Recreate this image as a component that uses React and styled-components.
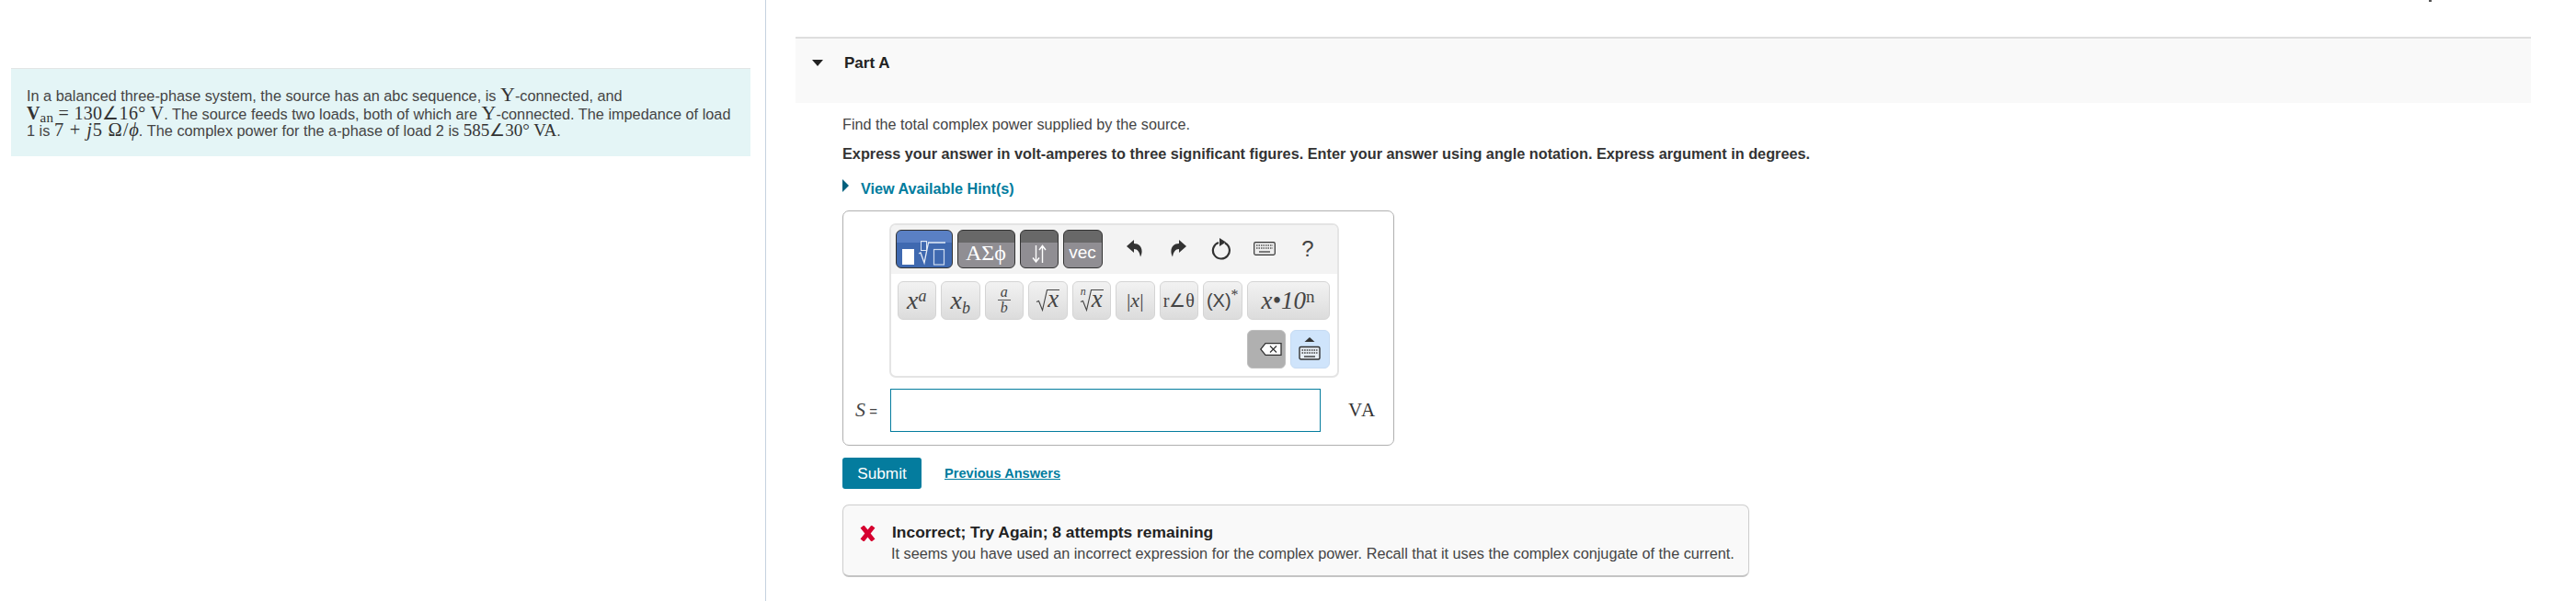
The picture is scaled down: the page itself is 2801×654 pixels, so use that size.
import React from "react";
import styled, { createGlobalStyle } from "styled-components";

const Global = createGlobalStyle`
  html, body { margin: 0; padding: 0; background: #fff; }
  body { font-family: "Liberation Sans", Arial, sans-serif; color: #333; }
`;
const Page = styled.div`position: relative; display: flex; width: 2801px; height: 654px; overflow: hidden;`;
const ClippedMark = styled.i`position: absolute; top: 0; left: 2641px; width: 3px; height: 2px; background: #555;`;
const LeftPane = styled.aside`width: 833px; flex: none; border-right: 1px solid #c5d2df; padding: 74px 16px 0 12px; box-sizing: border-box;`;
const Prompt = styled.div`
  background: #e4f5f6; border-top: 1px solid #e2e6e6; height: 96px; box-sizing: border-box;
  padding: 17px 0 0 17px; font-size: 16.3px; color: #444; width: 804px; white-space: nowrap;
`;
const PromptLine = styled.div`height: 19.6px; line-height: 19.6px;`;
const M = styled.span`font-family: "Liberation Serif", serif; font-size: ${p => p.$s || 20}px; line-height: 1; color: #333; letter-spacing: ${p => p.$ls || 0}px; font-weight: ${p => p.$b ? 700 : 400}; font-style: ${p => p.$i ? "italic" : "normal"};`;
const Sub = styled.sub`font-size: 15px; line-height: 0; vertical-align: -3px;`;
const RightPane = styled.main`flex: 1; padding: 40px 49px 0 32px; min-width: 0;`;
const PartHeader = styled.header`
  height: 72px; box-sizing: border-box; background: #f9f9f9; border-top: 2px solid #dedede;
  display: flex; align-items: flex-start; padding: 18px 0 0 18px; gap: 23px;
`;
const Caret = styled.i`width: 0; height: 0; border-left: 6.5px solid transparent; border-right: 6.5px solid transparent; border-top: 7px solid #222; margin-top: 5px;`;
const PartTitle = styled.h2`margin: 0; font-size: 17px; line-height: 18px; font-weight: 700; color: #222;`;
const PartBody = styled.section`padding-left: 51px;`;
const Instruction = styled.p`margin: 14px 0 0; font-size: 16.2px; line-height: 19px; color: #444;`;
const BoldInstruction = styled.p`margin: 13px 0 0; font-size: 16.25px; line-height: 19px; font-weight: 700; color: #333;`;
const HintLink = styled.a`display: flex; align-items: flex-start; margin-top: 18px; height: 20px; gap: 13px; font-size: 16.2px; line-height: 20px; font-weight: 700; color: #007c9e;`;
const HintCaret = styled.i`width: 0; height: 0; border-top: 7px solid transparent; border-bottom: 7px solid transparent; border-left: 7px solid #00607e;`;
const AnswerBox = styled.div`
  margin-top: 14px; width: 600px; height: 256px; box-sizing: border-box; border: 1.5px solid #b0b0b0; border-radius: 7px;
  padding: 12.5px 0 0 49.5px;
`;
const Editor = styled.div`width: 489px; height: 168px; box-sizing: border-box; border: 2px solid #e4e4e4; border-radius: 7px; overflow: hidden;`;
const ToolHead = styled.div`height: 53px; background: #f3f3f3; display: flex; align-items: flex-start; padding: 5px 0 0 5px; box-sizing: border-box;`;
const Tabs = styled.div`display: flex; gap: 5px;`;
const Tab = styled.div`
  width: ${p => p.$w}px; height: 42px; box-sizing: border-box; border: 1.5px solid #333; border-radius: 6px; overflow: hidden;
  background: linear-gradient(${p => p.$on ? "#5a80c4 0 33%, #3f69b0 33%" : "#686868 0 33%, #908e93 33%"});
  display: flex; align-items: flex-end; justify-content: center; color: #fff; padding-bottom: 2px;
`;
const TabText = styled.span`font-family: ${p => p.$serif ? '"Liberation Serif", serif' : '"Liberation Sans", sans-serif'}; font-size: ${p => p.$s}px; line-height: 28px; color: #fff;`;
const Tools = styled.div`display: flex; margin-left: 12px; align-items: center; height: 42px;`;
const Tool = styled.div`width: 47px; display: flex; justify-content: center; color: #333;`;
const Help = styled.span`font-size: 24px; line-height: 26px; color: #444;`;
const KeyRow = styled.div`display: flex; gap: 5px; padding: 8px 0 0 7px;`;
const Key = styled.div`
  width: ${p => p.$w || 42.5}px; height: 42px; box-sizing: border-box; border: 1px solid #d4d4d4; border-radius: 6px;
  background: linear-gradient(#f2f2f2, #dcdcdc); display: flex; align-items: center; justify-content: center;
  font-family: ${p => p.$sans ? '"Liberation Sans", sans-serif' : '"Liberation Serif", serif'}; color: #444; font-size: ${p => p.$s || 28}px; white-space: nowrap;
`;
const KeyFace = styled.span`display: block; line-height: 32px;`;
const KeySup = styled.sup`font-size: ${p => p.$s || 18}px; line-height: 0; vertical-align: ${p => p.$up || 8}px; font-style: ${p => p.$plain ? "normal" : "italic"}; font-family: "Liberation Serif", serif;`;
const KeySub = styled.sub`font-size: 18px; line-height: 0; vertical-align: -5px; font-style: italic;`;
const Frac = styled.span`display: flex; flex-direction: column; align-items: center; font-size: 16px; line-height: 16px; font-style: italic;`;
const FracTop = styled.span`border-bottom: 1px solid #555; padding: 0 3px;`;
const Italic = styled.span`font-style: italic;`;
const RadicalWrap = styled.span`position: relative; display: flex; align-items: flex-start; height: 24px;`;
const RadicalIndex = styled.span`position: absolute; left: 1px; top: -4px; font-size: 12px; line-height: 12px; font-style: italic;`;
const RadicalBody = styled.span`display: block; border-top: 1px solid #444; height: 23px; line-height: 19px; font-size: 27px; font-style: italic; padding-right: 1px;`;
const ActionRow = styled.div`display: flex; justify-content: flex-end; gap: 5px; padding: 11px 8px 0 0;`;
const ActionKey = styled.div`
  width: 42.5px; height: 42px; box-sizing: border-box; border-radius: 6px; border: 1px solid ${p => p.$blue ? "#c6dbf2" : "#bdbdbd"};
  background: ${p => p.$blue ? "#cfe4fb" : "#b0b0b0"}; display: flex; flex-direction: column; align-items: center; justify-content: center;
`;
const InputRow = styled.div`display: flex; align-items: center; margin: 12px 0 0 -49.5px; height: 47px;`;
const Label = styled.div`width: 51px; padding-left: 13px; box-sizing: border-box; font-size: 15px; white-space: nowrap; color: #444;`;
const LabelS = styled.span`font-family: "Liberation Serif", serif; font-style: italic; font-size: 22px;`;
const AnswerInput = styled.div`width: 468px; height: 47px; box-sizing: border-box; border: 1.5px solid #047c9e; background: #fff;`;
const Unit = styled.div`margin-left: 30px; font-family: "Liberation Serif", serif; font-size: 21px; color: #333; letter-spacing: 1.5px;`;
const SubmitRow = styled.div`display: flex; align-items: center; margin-top: 13px; gap: 25px;`;
const Submit = styled.button`width: 86px; height: 34px; border: 0; border-radius: 3px; background: #047c9e; color: #fff; font: 17.2px "Liberation Sans", sans-serif; padding: 0;`;
const Prev = styled.a`font-size: 14.6px; font-weight: 700; color: #007c9e; text-decoration: underline;`;
const Feedback = styled.div`
  margin-top: 17px; width: 986px; height: 79px; box-sizing: border-box; border: 1px solid #cdcdcd; border-bottom: 2px solid #c4c4c4; border-radius: 7px; background: #f9f9f9;
  display: flex; padding: 20px 0 0 17px; gap: 16px;
`;
const FeedTexts = styled.div`display: flex; flex-direction: column;`;
const FeedTitle = styled.div`font-size: 17.4px; line-height: 19px; font-weight: 700; color: #222; padding-left: 1px;`;
const FeedBody = styled.div`font-size: 16.25px; line-height: 19px; color: #444; margin-top: 4px; white-space: nowrap;`;
const Cross = styled.svg`width: 19px; height: 17px; margin-top: 2px; flex: none;`;

const Undo = ({ flip }) => (
  <svg width="18" height="19" viewBox="0 0 18 19" style={flip ? { transform: "scaleX(-1)" } : undefined}>
    <path d="M8 0 0 7l8 7v-4c4 0 6 3 7 8.500 4-8 0-14.500-7-14.500z" fill="#333" />
  </svg>
);
const Reset = () => (
  <svg width="22" height="24" viewBox="0 0 22 24" fill="none">
    <path d="M8 5a9 9 0 1 0 7 .5" stroke="#333" strokeWidth="2.200" />
    <path d="M9 0l7 4.500L9 9z" fill="#333" />
  </svg>
);
const Keyboard = () => (
  <svg width="24" height="15" viewBox="0 0 24 15" fill="none">
    <rect x="0.700" y="0.700" width="22.600" height="13.600" rx="1.500" fill="#eee" stroke="#333" strokeWidth="1.200" />
    <path d="M3 4h18M3 7h18" stroke="#555" strokeWidth="1.500" strokeDasharray="1.500 1" />
    <path d="M6 11h12" stroke="#555" strokeWidth="1.500" />
  </svg>
);
const StackIcon = () => (
  <svg width="47" height="27" viewBox="0 0 47 27" fill="none">
    <rect x="0" y="9" width="13" height="17" fill="#fff" />
    <rect x="20.500" y="0.500" width="6" height="10" stroke="#dfe8f5" strokeWidth="1" />
    <path d="M18 14l2-1 4 11 4.500-22H47" stroke="#e4ebf6" strokeWidth="1.300" />
    <rect x="34.500" y="9.500" width="11" height="16.500" stroke="#cfdcf0" strokeWidth="1.200" />
  </svg>
);
const Arrows = () => (
  <svg width="16" height="20" viewBox="0 0 16 20" fill="none" stroke="#fff" strokeWidth="1.400" style={{ marginBottom: 3 }}>
    <path d="M4.500 1v18M1 14.500l3.500 4.500 3.500-4.500M11.500 20V1.500M8 6l3.500-4.500L15 6" />
  </svg>
);
const RadicalSign = () => (
  <svg width="13" height="24" viewBox="0 0 13 24" fill="none" style={{ flex: "none" }}>
    <path d="M1 13.500l2.500-1 4 10L12.500 .500h.5" stroke="#444" strokeWidth="1.100" />
  </svg>
);
const Radical = ({ n }) => (
  <RadicalWrap>
    {n && <RadicalIndex>{n}</RadicalIndex>}
    <RadicalSign />
    <RadicalBody>x</RadicalBody>
  </RadicalWrap>
);
const Backspace = () => (
  <svg width="24" height="14" viewBox="0 0 24 14" fill="none" style={{ marginLeft: 10 }}>
    <path d="M6 .700h17v12.600H6L.800 7z" fill="#fff" stroke="#333" strokeWidth="1.300" />
    <path d="M11 3.500l7 7M18 3.500l-7 7" stroke="#333" strokeWidth="1.200" />
  </svg>
);
const KeyUp = () => (
  <svg width="24" height="25" viewBox="0 0 24 25" fill="none">
    <path d="M12 0l5.500 5h-11z" fill="#333" />
    <rect x="1" y="10.500" width="22" height="13.500" rx="1.500" fill="#e8eef5" stroke="#333" strokeWidth="1.400" />
    <path d="M3.500 14h17M3.500 17h17" stroke="#444" strokeWidth="1.600" strokeDasharray="1.600 1" />
    <path d="M6 21h12" stroke="#444" strokeWidth="1.600" />
  </svg>
);

export default function App() {
  return (
    <Page>
      <Global />
      <ClippedMark />
      <LeftPane>
        <Prompt>
          <PromptLine>In a balanced three-phase system, the source has an abc sequence, is <M $s={22}>Y</M>-connected, and</PromptLine>
          <PromptLine><M $b>V</M><M $ls={0.3}><Sub>an</Sub> = 130∠16° V</M>. The source feeds two loads, both of which are <M $s={22}>Y</M>-connected. The impedance of load</PromptLine>
          <PromptLine>1 is <M $s={20.5} $ls={0.8}>7 + <M $i $s={20.5} $ls={0.8}>j</M>5 Ω/<M $i $s={20.5}>ϕ</M></M>. The complex power for the a-phase of load 2 is <M $s={19}>585∠30° VA</M>.</PromptLine>
        </Prompt>
      </LeftPane>
      <RightPane>
        <PartHeader>
          <Caret />
          <PartTitle>Part A</PartTitle>
        </PartHeader>
        <PartBody>
          <Instruction>Find the total complex power supplied by the source.</Instruction>
          <BoldInstruction>Express your answer in volt-amperes to three significant figures. Enter your answer using angle notation. Express argument in degrees.</BoldInstruction>
          <HintLink><HintCaret />View Available Hint(s)</HintLink>
          <AnswerBox>
            <Editor>
              <ToolHead>
                <Tabs>
                  <Tab $w={62} $on><StackIcon /></Tab>
                  <Tab $w={63}><TabText $serif $s={24}>ΑΣϕ</TabText></Tab>
                  <Tab $w={42}><Arrows /></Tab>
                  <Tab $w={43}><TabText $s={19}>vec</TabText></Tab>
                </Tabs>
                <Tools>
                  <Tool><Undo /></Tool>
                  <Tool><Undo flip /></Tool>
                  <Tool><Reset /></Tool>
                  <Tool><Keyboard /></Tool>
                  <Tool><Help>?</Help></Tool>
                </Tools>
              </ToolHead>
              <KeyRow>
                <Key><KeyFace><Italic>x</Italic><KeySup>a</KeySup></KeyFace></Key>
                <Key><KeyFace><Italic>x</Italic><KeySub>b</KeySub></KeyFace></Key>
                <Key><Frac><FracTop>a</FracTop><span>b</span></Frac></Key>
                <Key><Radical /></Key>
                <Key><Radical n="n" /></Key>
                <Key $s={22}><KeyFace>|<Italic>x</Italic>|</KeyFace></Key>
                <Key $s={20}>r∠θ</Key>
                <Key $s={20} $sans><KeyFace>(X)<KeySup $s={16} $plain>*</KeySup></KeyFace></Key>
                <Key $w={90} $s={27}><KeyFace><Italic>x•10<KeySup $s={19} $plain $up={7}>n</KeySup></Italic></KeyFace></Key>
              </KeyRow>
              <ActionRow>
                <ActionKey><Backspace /></ActionKey>
                <ActionKey $blue><KeyUp /></ActionKey>
              </ActionRow>
            </Editor>
            <InputRow>
              <Label><LabelS>S</LabelS> =</Label>
              <AnswerInput />
              <Unit>VA</Unit>
            </InputRow>
          </AnswerBox>
          <SubmitRow>
            <Submit>Submit</Submit>
            <Prev>Previous Answers</Prev>
          </SubmitRow>
          <Feedback>
            <Cross viewBox="0 0 19 17"><path d="M3.500 1l12 15M15.500 1l-12 15" stroke="#d6002f" strokeWidth="5" fill="none" /></Cross>
            <FeedTexts>
              <FeedTitle>Incorrect; Try Again; 8 attempts remaining</FeedTitle>
              <FeedBody>It seems you have used an incorrect expression for the complex power. Recall that it uses the complex conjugate of the current.</FeedBody>
            </FeedTexts>
          </Feedback>
        </PartBody>
      </RightPane>
    </Page>
  );
}
